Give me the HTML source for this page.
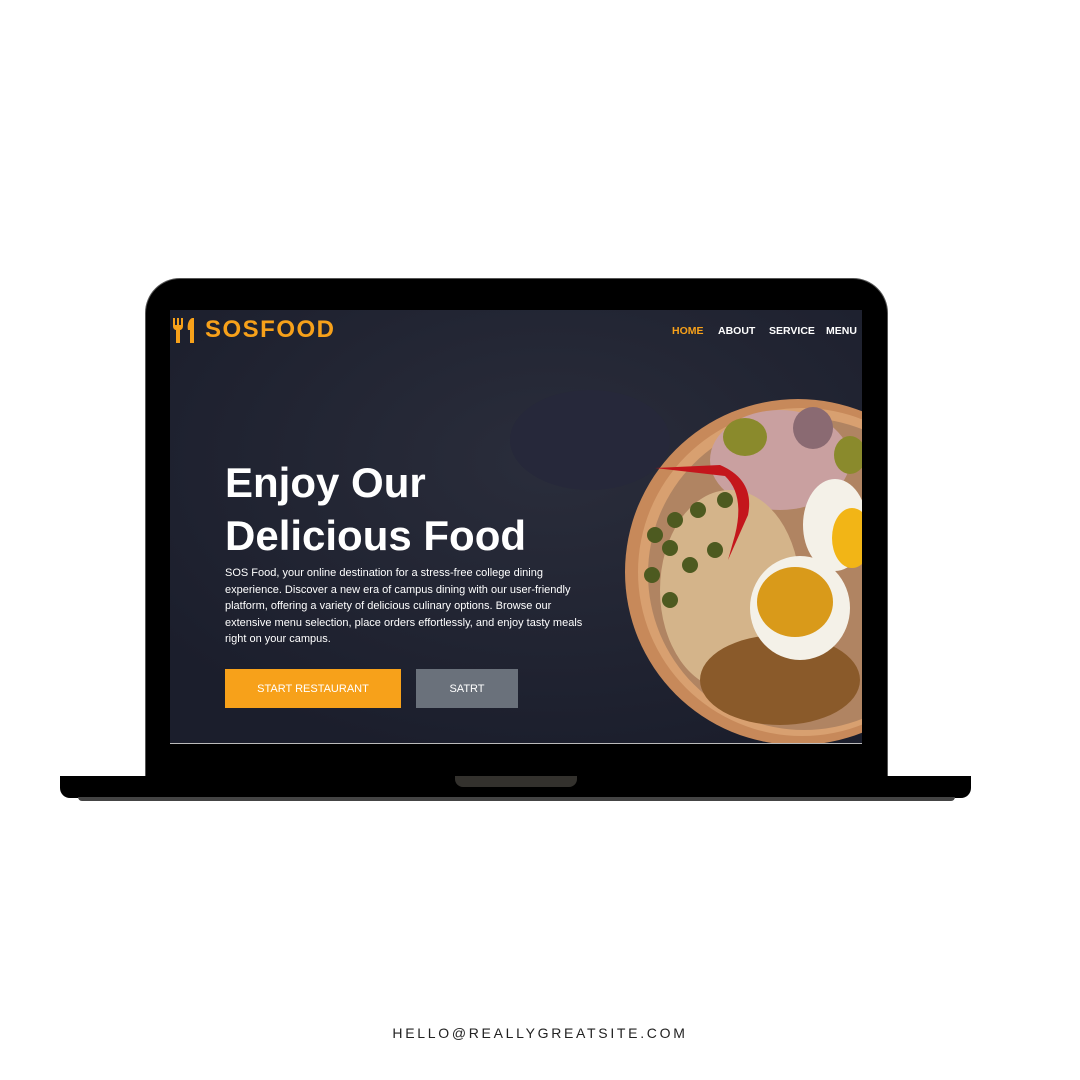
<!DOCTYPE html>
<html><head><style>
body{margin:0;width:1080px;height:1080px;background:#fff;position:relative;overflow:hidden;font-family:"Liberation Sans",sans-serif}
.body{position:absolute;left:146px;top:279px;width:741px;height:510px;background:#000;border-radius:34px 34px 0 0;box-shadow:0 0 0 1px #555}
.base{position:absolute;left:60px;top:776px;width:911px;height:22px;background:#000;border-radius:0 0 10px 10px}
.shadow{position:absolute;left:78px;top:797px;width:877px;height:4px;background:#444;border-radius:0 0 4px 4px}
.notch{position:absolute;left:455px;top:776px;width:122px;height:11px;background:#33312d;border-radius:0 0 8px 8px}
.screen{position:absolute;left:170px;top:310px;width:692px;height:433px;background:#1e2232;overflow:hidden;border-bottom:1px solid #bbb}
.nav{position:absolute;top:15px;font-size:10.5px;font-weight:bold;color:#fff}
h1{position:absolute;left:55px;top:146px;margin:0;color:#fff;font-size:42px;line-height:53px;font-weight:bold}
p{position:absolute;left:55px;top:255px;width:365px;margin:0;color:#fff;font-size:11px;line-height:16.5px}
.btn{position:absolute;top:359px;height:39px;color:#fff;font-size:11px;display:flex;align-items:center;justify-content:center}
.mail{position:absolute;top:1025px;left:0;width:1080px;text-align:center;font-size:14px;letter-spacing:2.7px;color:#222}
</style></head><body>
<div class="body"></div>
<div class="base"></div><div class="shadow"></div><div class="notch"></div>
<div class="screen">
<svg width="692" height="433" style="position:absolute;left:0;top:0">
<defs><radialGradient id="bg" cx="0.55" cy="0.35" r="0.7"><stop offset="0" stop-color="#2a2d3b"/><stop offset="1" stop-color="#1b1e2c"/></radialGradient></defs>
<rect width="692" height="433" fill="url(#bg)"/>
<ellipse cx="420" cy="130" rx="80" ry="50" fill="#26283a"/>
<circle cx="628" cy="262" r="173" fill="#c7895a"/>
<circle cx="632" cy="262" r="164" fill="#d8a070"/>
<circle cx="634" cy="264" r="156" fill="#b08462"/>
<ellipse cx="610" cy="150" rx="70" ry="50" fill="#c9a0a0"/>
<ellipse cx="560" cy="280" rx="70" ry="100" fill="#d4b48a"/>
<ellipse cx="610" cy="370" rx="80" ry="45" fill="#8a5a2a"/>
<g fill="#4d5a20"><circle cx="505" cy="210" r="8"/><circle cx="528" cy="200" r="8"/><circle cx="500" cy="238" r="8"/><circle cx="520" cy="255" r="8"/><circle cx="545" cy="240" r="8"/><circle cx="482" cy="265" r="8"/><circle cx="555" cy="190" r="8"/><circle cx="485" cy="225" r="8"/><circle cx="500" cy="290" r="8"/></g>
<ellipse cx="575" cy="127" rx="22" ry="19" fill="#8a8a2c"/>
<ellipse cx="643" cy="118" rx="20" ry="21" fill="#8a6a72"/>
<ellipse cx="680" cy="145" rx="16" ry="19" fill="#8a8a2c"/>
<path d="M485 158 L550 155 Q585 170 578 205 L558 250 L565 225 Q575 185 555 166 Z" fill="#c4161c"/>
<ellipse cx="665" cy="215" rx="32" ry="46" fill="#f4f1e8"/><ellipse cx="682" cy="228" rx="20" ry="30" fill="#f2b516"/>
<ellipse cx="630" cy="298" rx="50" ry="52" fill="#f4f1e8"/><ellipse cx="625" cy="292" rx="38" ry="35" fill="#d99a1a"/>
</svg>
<svg style="position:absolute;left:2px;top:6px" width="24" height="28" viewBox="0 0 24 28"><path d="M1 2v8c0 3 2 4 3 4v13h4V14c1 0 3-1 3-4V2h-2v7H7V2H5v7H3V2z" fill="#f7a11a"/><path d="M20 2c-4 2-5 8-4 12h2v13h4V2z" fill="#f7a11a"/></svg>
<div style="position:absolute;left:35px;top:6px;color:#f7a11a;font-size:24px;font-weight:bold;letter-spacing:1.5px">SOSFOOD</div>
<div class="nav" style="left:502px;color:#f7a11a">HOME</div>
<div class="nav" style="left:548px">ABOUT</div>
<div class="nav" style="left:599px">SERVICE</div>
<div class="nav" style="left:656px">MENU</div>
<h1>Enjoy Our<br>Delicious Food</h1>
<p>SOS Food, your online destination for a stress-free college dining experience. Discover a new era of campus dining with our user-friendly platform, offering a variety of delicious culinary options. Browse our extensive menu selection, place orders effortlessly, and enjoy tasty meals right on your campus.</p>
<div class="btn" style="left:55px;width:176px;background:#f7a11a">START RESTAURANT</div>
<div class="btn" style="left:246px;width:102px;background:#6a717b">SATRT</div>
</div>
<div class="mail">HELLO@REALLYGREATSITE.COM</div>
</body></html>
